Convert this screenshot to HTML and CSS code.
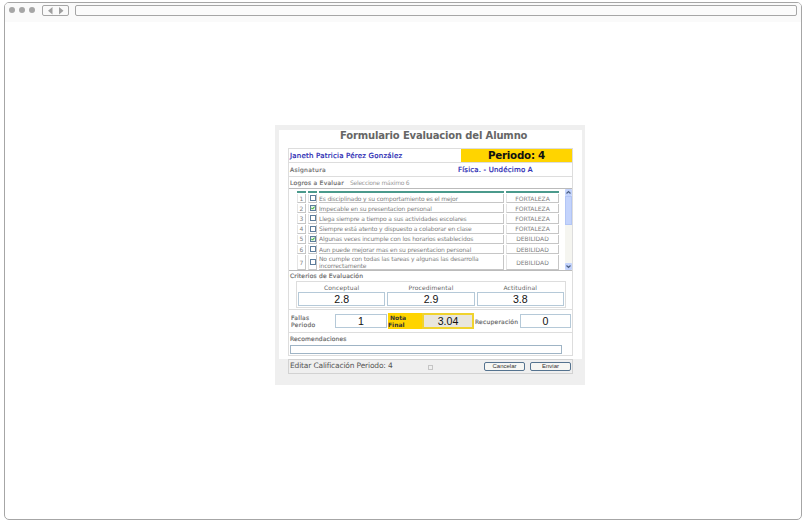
FILE: index.html
```html
<!DOCTYPE html>
<html lang="es">
<head>
<meta charset="utf-8">
<title>Formulario Evaluacion del Alumno</title>
<link rel="stylesheet" href="styles.css">
</head>
<body>
<div class="window">
  <header class="bar">
    <i class="dot"></i><i class="dot"></i><i class="dot"></i>
    <div class="nav"><svg width="25" height="9" viewBox="0 0 25 9"><path d="M9.5 1v7.5L5 4.8zM16 1v7.5L20.5 4.8z" fill="#a0a0a0"/></svg></div>
    <div class="address"></div>
  </header>
  <main class="form">
    <div class="sheet">
      <h1><span>Formulario Evaluacion del Alumno</span></h1>
      <div class="table">
        <div class="row name"><span class="student">Janeth Patricia Pérez González</span><span class="period">Periodo: 4</span></div>
        <div class="row subject"><span class="label asig">Asignatura</span><span class="course">Física. - Undécimo A</span></div>
        <div class="row goals"><span class="label log">Logros a Evaluar</span><span class="hint">Seleccione máximo 6</span></div>
        <div class="list">
          <div class="items">
            <div class="item head"><b></b><b></b><b class="text"></b><b></b></div>
            <div class="item"><b>1</b><b><i class="check"></i></b><b class="text">Es disciplinado y su comportamiento es el mejor</b><b class="state">FORTALEZA</b></div>
            <div class="item"><b>2</b><b><i class="check on"><svg width="4" height="4" viewBox="0 0 4 4"><path d="M.3 1.8l1.2 1.3L3.7.6" fill="none" stroke="#21a121"/></svg></i></b><b class="text">Impecable en su presentacion personal</b><b class="state">FORTALEZA</b></div>
            <div class="item"><b>3</b><b><i class="check"></i></b><b class="text">Llega siempre a tiempo a sus actividades escolares</b><b class="state">FORTALEZA</b></div>
            <div class="item"><b>4</b><b><i class="check"></i></b><b class="text">Siempre está atento y dispuesto a colaborar en clase</b><b class="state">FORTALEZA</b></div>
            <div class="item"><b>5</b><b><i class="check on"><svg width="4" height="4" viewBox="0 0 4 4"><path d="M.3 1.8l1.2 1.3L3.7.6" fill="none" stroke="#21a121"/></svg></i></b><b class="text">Algunas veces incumple con los horarios establecidos</b><b class="state">DEBILIDAD</b></div>
            <div class="item"><b>6</b><b><i class="check"></i></b><b class="text">Aun puede mejorar mas en su presentacion personal</b><b class="state">DEBILIDAD</b></div>
            <div class="item tall"><b>7</b><b><i class="check"></i></b><b class="text"><span>No cumple con todas las tareas y algunas las desarrolla<br>incorrectamente</span></b><b class="state">DEBILIDAD</b></div>
          </div>
          <div class="scroll">
            <svg width="7" height="7" viewBox="0 0 7 7"><rect width="7" height="7" rx="1" fill="#c3d3fc"/><path d="M1.5 4.5l2-2 2 2" fill="none" stroke="#4d6185" stroke-width="1.2"/></svg>
            <div class="thumb"></div>
            <svg class="down" width="7" height="7" viewBox="0 0 7 7"><rect width="7" height="7" rx="1" fill="#c3d3fc"/><path d="M1.5 2.5l2 2 2-2" fill="none" stroke="#4d6185" stroke-width="1.2"/></svg>
          </div>
        </div>
        <div class="criteria">
          <span class="label crit">Criterios de Evaluación</span>
          <div class="grades">
            <div><span>Conceptual</span><div class="field">2.8</div></div>
            <div><span>Procedimental</span><div class="field">2.9</div></div>
            <div><span>Actitudinal</span><div class="field">3.8</div></div>
          </div>
        </div>
        <div class="totals">
          <span class="label fallas">Fallas<br>Periodo</span><div class="field f1">1</div>
          <span class="nota">&nbsp;Nota<br>Final</span><div class="field final">3.04</div>
          <span class="label recup">Recuperación</span><div class="field f3">0</div>
        </div>
        <div class="notes"><span class="label recom">Recomendaciones</span><div class="field"></div></div>
      </div>
    </div>
    <footer class="foot"><span class="edit">Editar Calificación Periodo: 4</span><i class="mini"></i><span class="button">Cancelar</span><span class="button">Enviar</span></footer>
  </main>
</div>
</body>
</html>
```
FILE: styles.css
```css
* { box-sizing: border-box; }
body { margin: 0; background: #fff; font-family: "DejaVu Sans", sans-serif; overflow: hidden; }
h1 { margin: 0; }
b, i { font-weight: normal; font-style: normal; }
span { white-space: nowrap; }
.window { width: 798px; height: 518px; margin: 2px 0 0 4px; border: 1px solid #a6a6a6; border-radius: 5px; overflow: hidden; }
.bar { display: flex; height: 19px; padding: 2px 4px 0 4px; background: #fafafa; }
.dot { width: 6px; height: 6px; margin: 2px 4px 0 0; border-radius: 50%; background: #a6a6a6; }
.nav { width: 27px; height: 11px; margin-left: 3px; border: 1px solid #a6a6a6; border-radius: 2px; }
.nav svg { display: block; }
.address { flex: 1; height: 11px; margin-left: 6px; border: 1px solid #a6a6a6; border-radius: 2px; background: #fbfbfb; }
.form { width: 310px; height: 260px; margin: 103px 0 0 270px; padding: 5px 3px 0 4px; background: #efefef; }
.sheet { height: 229px; padding: 0 9px; background: #fff; }
h1 { height: 18px; padding-left: 52px; font-size: 10px; letter-spacing: -.16px; line-height: 12px; color: #666; }
.table { width: 285px; height: 208px; border: 1px solid #ddd; }
.row { display: flex; align-items: center; height: 14px; border-bottom: 1px solid #ddd; padding-left: 1px; }
.student { width: 171px; font-size: 7px; letter-spacing: .22px; color: #1a1ab0; -webkit-text-stroke: .2px; }
.period { flex: 1; height: 13px; background: #ffd400; text-align: center; font-size: 10.3px; letter-spacing: -.25px; line-height: 13px; font-weight: bold; color: #111; }
.label { font-size: 6px; letter-spacing: .25px; color: #666; -webkit-text-stroke: .15px; }
.asig { width: 168px; letter-spacing: .35px; }
.course { font-size: 7px; letter-spacing: .18px; color: #1a1ab0; -webkit-text-stroke: .2px; }
.goals { height: 12px; border-bottom-color: #bbb; }
.hint { margin-left: 6px; font-size: 6px; letter-spacing: -.25px; color: #999; }
.list { display: flex; justify-content: space-between; height: 82px; border-bottom: 1px solid #bbb; overflow: hidden; }
.items { width: 262px; margin-left: 8px; padding-top: 1px; }
.item { display: grid; grid-template-columns: 9px 9px 185px 53px; column-gap: 2px; height: 10.2px; padding-bottom: 1px; font-size: 6px; color: #808080; }
.item b { display: flex; align-items: center; justify-content: center; border: solid #c6c6c6; border-width: 0 1px 1px 0; border-left: 1px solid #e5e5e5; overflow: hidden; }
.item .text { justify-content: flex-start; border-left: 0; line-height: 7px; letter-spacing: -.145px; }
.item.head { height: 4px; padding: 1px 0; }
.item.head b { border: 0; background: #4b9a8c; }
.tall { height: 16px; }
.check { display: block; width: 6px; height: 6px; border: 1px solid #5d7c9b; background: #fff; flex: none; }
.check svg { display: block; }
.on { background: #e4f4e4; }
.scroll { width: 7px; background: #f5f5f0; display: flex; flex-direction: column; }
.thumb { height: 29px; background: #c3d3fc; border: 1px solid #b2c5f5; }
.down { margin-top: auto; }
.criteria { height: 39px; border-bottom: 1px solid #ddd; padding-left: 1px; }
.criteria .label { display: block; line-height: 10px; letter-spacing: .17px; }
.grades { display: flex; gap: 2px; width: 270px; height: 27px; margin-left: 6px; padding: 1px; border: 1px solid #ddd; }
.grades > div { flex: 1; text-align: center; font-size: 6px; letter-spacing: .15px; line-height: 9px; color: #666; }
.grades span { display: block; }
.field { height: 14px; border: 1px solid #b5c9d8; background: #fff; font: 10.6px/12px "Liberation Sans", sans-serif; letter-spacing: 0; text-align: center; color: #111; }
.totals { display: flex; align-items: center; height: 23px; border-bottom: 1px solid #ddd; padding-left: 2px; }
.fallas { width: 44px; line-height: 7px; letter-spacing: .3px; }
.f1 { width: 52px; }
.nota { width: 34px; height: 16px; margin-left: 1px; background: #ffd400; font-size: 6px; line-height: 7px; font-weight: bold; letter-spacing: 0; color: #333; padding-top: 1px; }
.final { width: 52px; height: 16px; border: 2px solid #f0d32e; background: #e9e6dd; }
.recup { width: 45px; margin-left: 1px; letter-spacing: .2px; }
.f3 { width: 51px; }
.notes { padding-left: 1px; }
.notes .label { display: block; height: 12px; line-height: 12px; letter-spacing: .13px; }
.notes .field { width: 272px; height: 9px; border-color: #9fb4c5; }
.foot { display: flex; align-items: center; width: 285px; height: 15px; margin-left: 9px; border: 1px solid #d2d2d2; }
.edit { flex: none; width: 139px; padding-left: 1px; font-size: 7.5px; letter-spacing: -.17px; color: #555; line-height: 12px; align-self: flex-start; }
.mini { flex: none; width: 5px; height: 5px; margin: 2px 51px 0 0; border: 1px solid #c5c5c5; }
.button { flex: none; width: 41px; height: 9px; margin-right: 5px; border: 1px solid #55738f; border-radius: 2px; background: #f6f6f3; font: 6px/7px "Liberation Sans", sans-serif; text-align: center; color: #333; }
.button:last-child { margin-right: 0; }
```
